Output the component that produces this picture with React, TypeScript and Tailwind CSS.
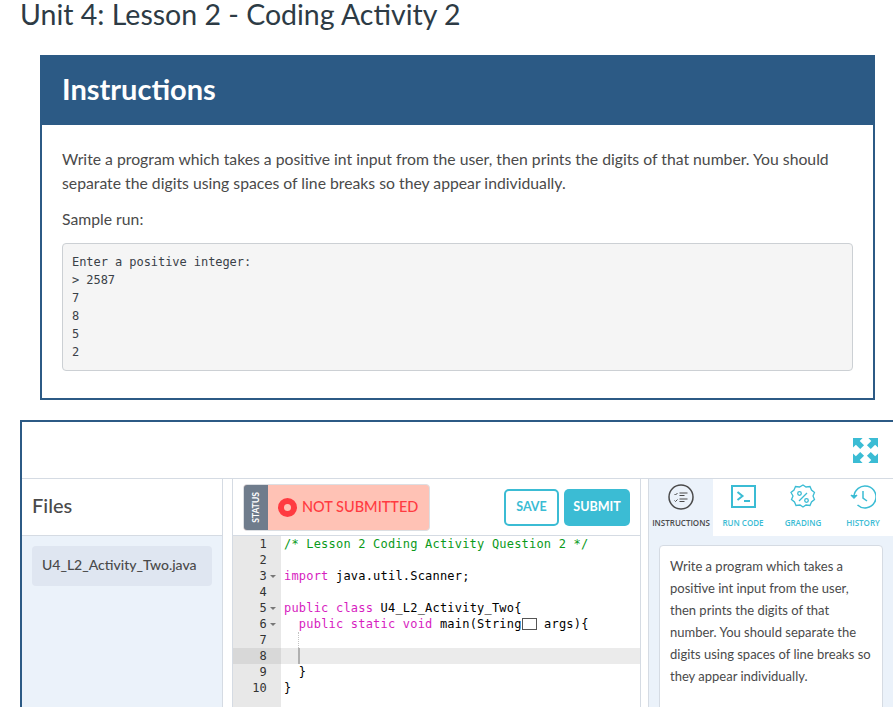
import type { ReactNode } from 'react'

const lato = "font-['Lato',sans-serif]"
const mono = "font-['DejaVu_Sans_Mono',monospace]"

const sampleRun = ['Enter a positive integer:', '> 2587', '7', '8', '5', '2']

type CodeLine = { n: number; fold?: boolean; active?: boolean; guide?: boolean; code?: ReactNode }

const Kw = ({ children }: { children: ReactNode }) => <span className="text-[#d71dbf]">{children}</span>

const codeLines: CodeLine[] = [
  { n: 1, code: <span className="text-[#0a9a1a]">/* Lesson 2 Coding Activity Question 2 */</span> },
  { n: 2 },
  { n: 3, fold: true, code: <><Kw>import</Kw> java.util.Scanner;</> },
  { n: 4 },
  { n: 5, fold: true, code: <><Kw>public class</Kw> U4_L2_Activity_Two{'{'}</> },
  { n: 6, fold: true, code: <>  <Kw>public static void</Kw> main(String<span className="inline-block h-[12px] w-[15px] border border-[#555] align-[-2px]" /> args){'{'}</> },
  { n: 7, guide: true },
  { n: 8, active: true },
  { n: 9, code: <>  {'}'}</> },
  { n: 10, code: <>{'}'}</> },
]

function Tab({ label, active, children }: { label: string; active?: boolean; children: ReactNode }) {
  return (
    <div className={`flex flex-col items-center h-[57px] pt-[4px] ${active ? 'w-[64px] bg-[#ebf2fa]' : 'w-[60px] bg-white'}`}>
      <div className="h-[27px] flex items-center justify-center">{children}</div>
      <span className={`mt-[7px] text-[8px] font-['Open_Sans',sans-serif] font-semibold whitespace-nowrap ${active ? 'text-[#4a4a4a]' : 'text-[#3bbcd4]'}`}>
        {label}
      </span>
    </div>
  )
}

export default function App() {
  return (
    <div className={`${lato} w-[893px] h-[707px] overflow-hidden bg-white`}>
      <h1 className="pl-[20px] text-[28.500px] leading-[28px] text-[#2d3b45] h-[55px]">Unit 4: Lesson 2 - Coding Activity 2</h1>

      <section className="ml-[40px] mr-[18px] h-[345px] border-2 border-t-0 border-[#2c5a85]">
        <h2 className="h-[70px] -mx-[2px] bg-[#2c5a85] pl-[22px] text-[29px] font-bold leading-[68px] text-white">Instructions</h2>
        <div className="px-[20px] pt-[22px] text-[#4a4a4a]">
          <p className="text-[15.750px] leading-[24px]">
            Write a program which takes a positive int input from the user, then prints the digits of that number. You should separate the digits using spaces of line breaks so they appear individually.
          </p>
          <p className="mt-[12px] text-[15.750px] leading-[24px]">Sample run:</p>
          <pre className={`${mono} mt-[12px] h-[128px] rounded-[4px] border border-[#ccd0d4] bg-[#f5f5f5] px-[9px] py-[9px] text-[12px] tracking-[-0.06px] leading-[18px] text-[#3a4148]`}>
            {sampleRun.join('\n')}
          </pre>
        </div>
      </section>

      <section className="mt-[20px] ml-[20px] h-[287px] border-2 border-b-0 border-r-0 border-[#2c5a85]">
        <div className="h-[57px] flex justify-end border-b border-[#d5dbe3] pt-[16px] pr-[15px]">
          <svg width="25" height="25" viewBox="0 0 26 26" fill="#3bbcd4">
            <path d="M0 0H10L7 3L11.500 7.500L7.500 11.500L3 7L0 10Z" />
            <path d="M26 0H16L19 3L14.500 7.500L18.500 11.500L23 7L26 10Z" />
            <path d="M0 26H10L7 23L11.500 18.500L7.500 14.500L3 19L0 16Z" />
            <path d="M26 26H16L19 23L14.500 18.500L18.500 14.500L23 19L26 16Z" />
          </svg>
        </div>

        <div className="flex h-[228px]">
          <aside className="w-[201px] border-r border-[#d5dbe3]">
            <div className="h-[57px] border-b border-[#d5dbe3] pl-[10px] text-[20px] font-medium leading-[53px] text-[#4a4a4a]">Files</div>
            <div className="h-[171px] bg-[#ebf2fa] px-[10px] pt-[10px]">
              <div className="h-[40px] rounded-[4px] bg-[#dfe6f1] pl-[10px] text-[14px] font-medium leading-[38px] text-[#4a4a4a]">U4_L2_Activity_Two.java</div>
            </div>
          </aside>

          <div className="w-[10px] border-r border-[#d5dbe3]" />

          <div className="w-[408px] border-r border-[#d5dbe3]">
            <div className="h-[57px] flex items-center justify-between border-b border-[#d5dbe3] pl-[10px] pr-[10px]">
              <div className="flex h-[47px] w-[187px] overflow-hidden rounded-[4px] border border-[#dcdfe3] bg-[#ffc2b5]">
                <div className="w-[24px] bg-[#6f7c8c] flex items-center justify-center">
                  <span className="-rotate-90 text-[8.500px] font-bold text-white">STATUS</span>
                </div>
                <div className="flex items-center pl-[10px] gap-[5px]">
                  <span className="w-[19px] h-[19px] rounded-full border-[6px] border-[#ff3b41] bg-[#ffc2b5]" />
                  <span className="text-[14.500px] font-medium whitespace-nowrap text-[#ff3b41]">NOT SUBMITTED</span>
                </div>
              </div>
              <div className="flex gap-[5px]">
                <button className="h-[37px] w-[55px] rounded-[5px] border-2 border-[#3bbcd4] text-[12.500px] font-bold text-[#3bbcd4]">SAVE</button>
                <button className="h-[37px] w-[66px] rounded-[5px] bg-[#3bbcd4] text-[12.500px] font-bold text-white">SUBMIT</button>
              </div>
            </div>
            <div className={`${mono} h-[171px] overflow-hidden text-[12px] tracking-[0.2px] leading-[16px] text-black bg-[linear-gradient(to_right,#e8e8e8_48px,#fff_48px)]`}>
              {codeLines.map((l) => (
                <div key={l.n} className={`flex h-[16px] ${l.active ? 'bg-[#ebebeb]' : ''}`}>
                  <div className={`relative w-[48px] shrink-0 pr-[14px] text-right text-[#333] ${l.active ? 'bg-[#d8d8d8]' : ''}`}>
                    {l.n}
                    {l.fold && <span className="absolute right-[5px] top-[7px] border-x-[3px] border-t-[3px] border-x-transparent border-t-[#777]" />}
                  </div>
                  <pre className={`${mono} pl-[3px] whitespace-pre`}>
                    {l.code}
                    {l.active && <span className="ml-[14px] inline-block h-[16px] w-[2px] bg-[#b0b0b0] align-top" />}
                    {l.guide && <span className="ml-[14px] inline-block h-[16px] border-l border-dotted border-[#c4c4c4] align-top" />}
                  </pre>
                </div>
              ))}
            </div>
          </div>

          <div className="w-[8px] border-r border-[#d5dbe3]" />

          <div className="flex-1 bg-[#ebf2fa]">
            <div className="flex h-[57px]">
              <Tab label="INSTRUCTIONS" active>
                <svg width="26" height="26" viewBox="0 0 26 26" fill="none" stroke="#4a4a4a">
                  <circle cx="13" cy="13" r="12" strokeWidth="1.500" />
                  <path d="M6.500 10l1 1 2-2M6.500 16.500l1 1 2-2M11.500 9h8M11.500 11.500h5M11.500 15h8M11.500 17.500h5" strokeWidth="1" />
                </svg>
              </Tab>
              <Tab label="RUN CODE">
                <svg width="25" height="23" viewBox="0 0 25 23" fill="none" stroke="#3bbcd4">
                  <rect x="1" y="1" width="23" height="21" strokeWidth="2" />
                  <path d="M6.500 7l5 4-5 4" strokeWidth="2" />
                  <path d="M13 16h6" strokeWidth="2" />
                </svg>
              </Tab>
              <Tab label="GRADING">
                <svg width="26" height="26" viewBox="0 0 26 26" fill="none" stroke="#3bbcd4" strokeWidth="1.300">
                  <path d="M13 1l3 2 4-.500 1.500 3.500 3 2.500-1.500 3.500 1.500 3.500-3 2.500-1.500 3.500-4-.500-3 2-3-2-4 .500-1.500-3.500-3-2.500 1.500-3.500L1 8.500l3-2.500 1.500-3.500 4 .500z" />
                  <path d="M9 17l8-8" />
                  <circle cx="9.500" cy="9.500" r="1.800" />
                  <circle cx="16.500" cy="16.500" r="1.800" />
                </svg>
              </Tab>
              <Tab label="HISTORY">
                <svg width="26" height="26" viewBox="0 0 26 26" fill="none" stroke="#3bbcd4" strokeWidth="1.500">
                  <path d="M4 13a11 11 0 1 1 3.500 8" />
                  <path d="M1 11l3 3 3-3" fill="#3bbcd4" />
                  <path d="M13 7v7l4 3" />
                </svg>
              </Tab>
            </div>
            <div className="mx-[10px] mt-[9px] h-[170px] rounded-t-[4px] border border-[#d5dbe3] bg-white px-[10px] pt-[9px] text-[13px] leading-[22px] text-[#4a4a4a]">
              Write a program which takes a positive int input from the user, then prints the digits of that number. You should separate the digits using spaces of line breaks so they appear individually.
            </div>
          </div>
        </div>
      </section>
    </div>
  )
}
